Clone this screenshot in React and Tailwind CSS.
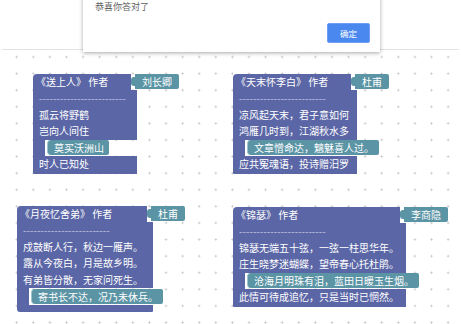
import React from 'react';

const Tab = ({ author }) => (
  <div className="flex shrink-0">
    <div className="mt-[3px] h-[9px] w-[4px] rounded-l-[3px] bg-[#5b94a5]" />
    <div className="h-[15px] rounded-r-[2px] bg-[#5b94a5] px-[7px] text-[10px] leading-[15px] text-white whitespace-nowrap">
      {author}
    </div>
  </div>
);

const Line = ({ children }) => (
  <div className="h-[16.5px] bg-[#5b66a6] pl-[6px] text-[10px] leading-[16.5px] text-white whitespace-nowrap">
    {children}
  </div>
);

const Plug = ({ children }) => (
  <div className="flex h-[16.5px] items-center">
    <div className="h-full w-[12px] shrink-0 bg-[#5b66a6]" />
    <div className="ml-[2px] h-[15px] shrink-0 rounded-l-[4px] rounded-r-[2px] border-l border-[#9fc3ce] bg-[#5b94a5] pl-[6px] pr-[5px] text-[10px] leading-[15px] text-white whitespace-nowrap">
      {children}
    </div>
  </div>
);

const Block = ({ className, title, author, rows, tail }) => (
  <div className={`absolute ${className}`}>
    <div className="flex">
      <div className="h-[16px] flex-1 rounded-tl-[4px] bg-[#5b66a6] pl-[3px] text-[10px] leading-[16px] text-white whitespace-nowrap">
        {title}
      </div>
      <div className="-mr-[100px] flex w-[106px] shrink-0">
        <Tab author={author} />
      </div>
    </div>
    <Line>
      <span className="text-[#c3c7e4]">-------------------------</span>
    </Line>
    {rows.map((r, i) =>
      r.plug ? <Plug key={i}>{r.text}</Plug> : <Line key={i}>{r.text}</Line>
    )}
    <div className={`${tail} rounded-b-[3px] rounded-br-[1px] bg-[#5b66a6]`} />
  </div>
);

export default function App() {
  return (
    <div className="relative flex h-[324px] w-[461px] flex-col overflow-hidden bg-white font-['Noto_Sans_CJK_SC',sans-serif]">
      <div className="h-[49px] shrink-0" />
      <div className="mx-[2px] flex-1 border-t border-[#e3e3e3] bg-[radial-gradient(circle_at_center,#c0c0c0_0.8px,transparent_1.2px)] bg-[size:16.6px_16.6px] bg-[position:6.4px_-1.3px]" />

      <Block
        className="left-[33px] top-[74px] w-[104px]"
        title="《送上人》 作者"
        author="刘长卿"
        rows={[
          { text: '孤云将野鹤' },
          { text: '岂向人间住' },
          { text: '莫买沃洲山', plug: true },
          { text: '时人已知处' },
        ]}
        tail="h-[1.5px]"
      />

      <Block
        className="left-[233px] top-[74px] w-[124px]"
        title="《天末怀李白》 作者"
        author="杜甫"
        rows={[
          { text: '凉风起天末，君子意如何' },
          { text: '鸿雁几时到，江湖秋水多' },
          { text: '文章憎命达，魑魅喜人过。', plug: true },
          { text: '应共冤魂语，投诗赠汨罗' },
        ]}
        tail="h-[1.5px]"
      />

      <Block
        className="left-[17px] top-[206px] w-[136px]"
        title="《月夜忆舍弟》 作者"
        author="杜甫"
        rows={[
          { text: '戍鼓断人行，秋边一雁声。' },
          { text: '露从今夜白，月是故乡明。' },
          { text: '有弟皆分散，无家问死生。' },
          { text: '寄书长不达，况乃未休兵。', plug: true },
        ]}
        tail="h-[7px]"
      />

      <Block
        className="left-[233px] top-[207px] w-[173px]"
        title="《锦瑟》 作者"
        author="李商隐"
        rows={[
          { text: '锦瑟无端五十弦，一弦一柱思华年。' },
          { text: '庄生晓梦迷蝴蝶，望帝春心托杜鹃。' },
          { text: '沧海月明珠有泪，蓝田日暖玉生烟。', plug: true },
          { text: '此情可待成追忆，只是当时已惘然。' },
        ]}
        tail="h-[1.5px]"
      />

      {/* alert dialog */}
      <div className="absolute left-[83px] top-[-20px] flex h-[72px] w-[297px] flex-col bg-white shadow-[0_1px_4px_rgba(0,0,0,0.35)]">
        <div className="pl-[12px] pt-[21px] text-[9px] leading-[12px] text-[#5f5f5f]">恭喜你答对了</div>
        <div className="mt-auto mb-[9px] mr-[10px] flex justify-end">
          <button className="h-[20px] w-[43px] rounded-[2px] border border-[#6f9ff5] bg-[#4a88f0] text-[8.5px] text-white">
            确定
          </button>
        </div>
      </div>
    </div>
  );
}
